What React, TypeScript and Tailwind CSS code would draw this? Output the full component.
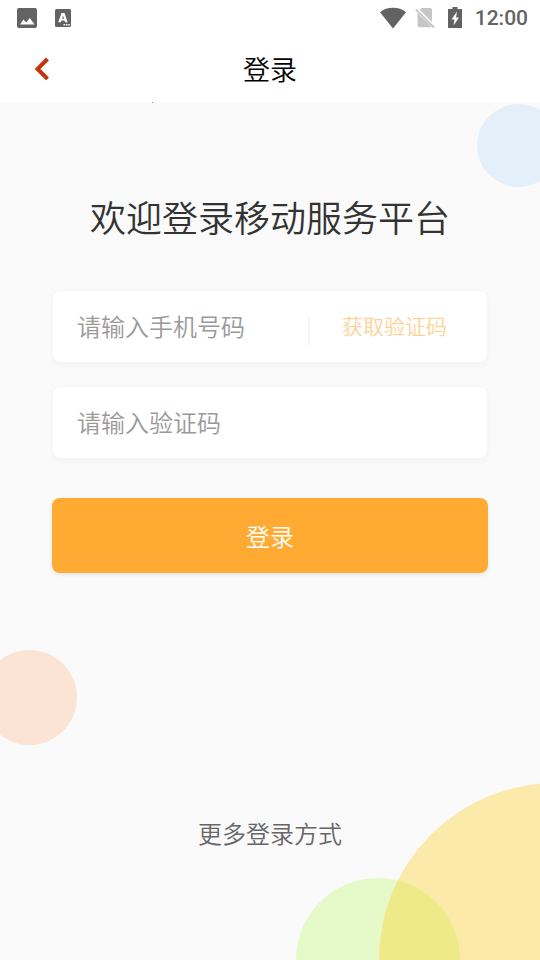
import React, { useState } from 'react';

const StatusBar = () => (
  <div className="flex h-9 items-center justify-between bg-white pl-4 pr-3 text-[#636363]">
    <div className="flex items-center gap-4">
      <svg className="size-[22px]" viewBox="0 0 22 22" fill="currentColor" aria-hidden="true">
        <path
          fillRule="evenodd"
          d="M3 1h16a2 2 0 0 1 2 2v16a2 2 0 0 1-2 2H3a2 2 0 0 1-2-2V3a2 2 0 0 1 2-2ZM4 17.500h14.500l-4.700-6.500-3.600 4.600-2.800-3Z"
        />
      </svg>
      <svg className="size-[18px]" viewBox="0 0 18 18" fill="currentColor" aria-hidden="true">
        <path
          fillRule="evenodd"
          d="M2.500 0h13A1.500 1.500 0 0 1 17 1.500v15a1.500 1.500 0 0 1-1.500 1.500h-13A1.500 1.500 0 0 1 1 16.500v-15A1.500 1.500 0 0 1 2.500 0ZM7.500 4 4.300 13.300h2.600l.5-1.700h3.200l.5 1.700h2.600L10.500 4ZM8 9.700h2L9 6.600ZM9.500 15v1.500H11V15ZM12 15v1.500h1.500V15ZM14.300 15v1.500h1.500V15Z"
        />
      </svg>
    </div>
    <div className="flex items-center">
      <svg className="mr-2 h-[22px] w-7" viewBox="0 0 28 22" fill="currentColor" aria-hidden="true">
        <path d="M14 21.500 1 5.200C4.500 2.300 9 .8 14 .8s9.500 1.500 13 4.400Z" />
      </svg>
      <svg className="mr-3 h-[22px] w-5" viewBox="0 0 20 22" fill="#c6c6c6" aria-hidden="true">
        <path d="M6.800 1H15a2 2 0 0 1 2 2v12L4.900 2.900ZM2.500 5.800 17 20.300H4.500a2 2 0 0 1-2-2Z" />
        <path d="M.8 2.300 19 20.500" stroke="#c6c6c6" strokeWidth="1.800" />
      </svg>
      <svg className="mr-3 h-[22px] w-4" viewBox="0 0 16 22" fill="currentColor" aria-hidden="true">
        <path
          fillRule="evenodd"
          d="M5.500 0h5v2H15v19H1V2h4.500ZM10 4.500 4.500 12.500h3L6.500 18.500 12 10.500H9Z"
        />
      </svg>
      <span className="font-['Roboto',sans-serif] text-[21px] font-medium leading-6">12:00</span>
    </div>
  </div>
);

const Header = () => (
  <header className="relative flex h-[66px] items-center justify-center bg-white">
    <button type="button" aria-label="返回" className="absolute left-8 top-5 flex h-6 w-5 items-center justify-center">
      <svg className="h-6 w-5" viewBox="0 0 20 24" fill="none" stroke="#c5330a" strokeWidth="4" aria-hidden="true">
        <path d="M15.500 3 5.500 13l10 10" />
      </svg>
    </button>
    <h1 className="text-[27px] font-[350] leading-10 text-black">登录</h1>
    {/* page load progress */}
    <span className="absolute left-[152px] top-full size-px bg-[#2cb588]" />
  </header>
);

const Bubbles = () => (
  <div className="pointer-events-none absolute inset-0 overflow-hidden" aria-hidden="true">
    <div className="absolute -right-5 top-0.5 size-[83px] rounded-full bg-[#e4f0f9]" />
    <div className="absolute -left-[18px] top-[548px] size-[95px] rounded-full bg-[#fce4d5]" />
    <div className="absolute -bottom-[82px] right-20 size-[164px] rounded-full bg-[#e6f9c9]" />
    <div className="absolute -bottom-[177px] -right-[193px] size-[354px] rounded-full bg-[#ffca00]/32" />
  </div>
);

const App = () => {
  const [phone, setPhone] = useState('');
  const [code, setCode] = useState('');

  return (
    <div className="flex min-h-screen flex-col bg-[#fafafa] font-['Noto_Sans_CJK_SC',sans-serif] font-[350]">
      <StatusBar />
      <Header />
      <main className="relative flex grow flex-col px-[52px] pt-[86px]">
        <Bubbles />
        <h2 className="relative text-center text-4xl font-[350] leading-[56px] text-[#333]">欢迎登录移动服务平台</h2>

        <form className="relative mt-[46px] flex flex-col" onSubmit={(e) => e.preventDefault()}>
          <div className="flex h-[73px] items-center rounded-lg border border-[#f6f6f6] bg-white px-6 shadow-[0_2px_6px_rgba(0,0,0,0.03)]">
            <input
              type="tel"
              aria-label="请输入手机号码"
              placeholder="请输入手机号码"
              value={phone}
              onChange={(e) => setPhone(e.target.value)}
              className="mb-0.5 h-9 min-w-0 grow bg-transparent text-2xl text-[#333] outline-none placeholder:text-[#999]"
            />
            <span className="mt-2 h-7 w-0.5 shrink-0 bg-[#f5f5f5]" />
            <button type="button" className="mb-1 ml-8 mr-4 shrink-0 text-[21px] leading-8 text-[#fdd398]">
              获取验证码
            </button>
          </div>

          <div className="mt-[23px] flex h-[73px] items-center rounded-lg border border-[#f6f6f6] bg-white px-6 shadow-[0_2px_6px_rgba(0,0,0,0.03)]">
            <input
              type="text"
              aria-label="请输入验证码"
              placeholder="请输入验证码"
              value={code}
              onChange={(e) => setCode(e.target.value)}
              className="mb-0.5 h-9 min-w-0 grow bg-transparent text-2xl text-[#333] outline-none placeholder:text-[#999]"
            />
          </div>

          <button
            type="submit"
            className="mt-[39px] h-[75px] rounded-lg bg-[#ffaa33] text-2xl text-white shadow-[0_2px_4px_rgba(0,0,0,0.08)]"
          >
            登录
          </button>
        </form>

        <button type="button" className="relative mb-[109px] mt-auto self-center text-2xl leading-9 text-[#666]">
          更多登录方式
        </button>
      </main>
    </div>
  );
};

export default App;
